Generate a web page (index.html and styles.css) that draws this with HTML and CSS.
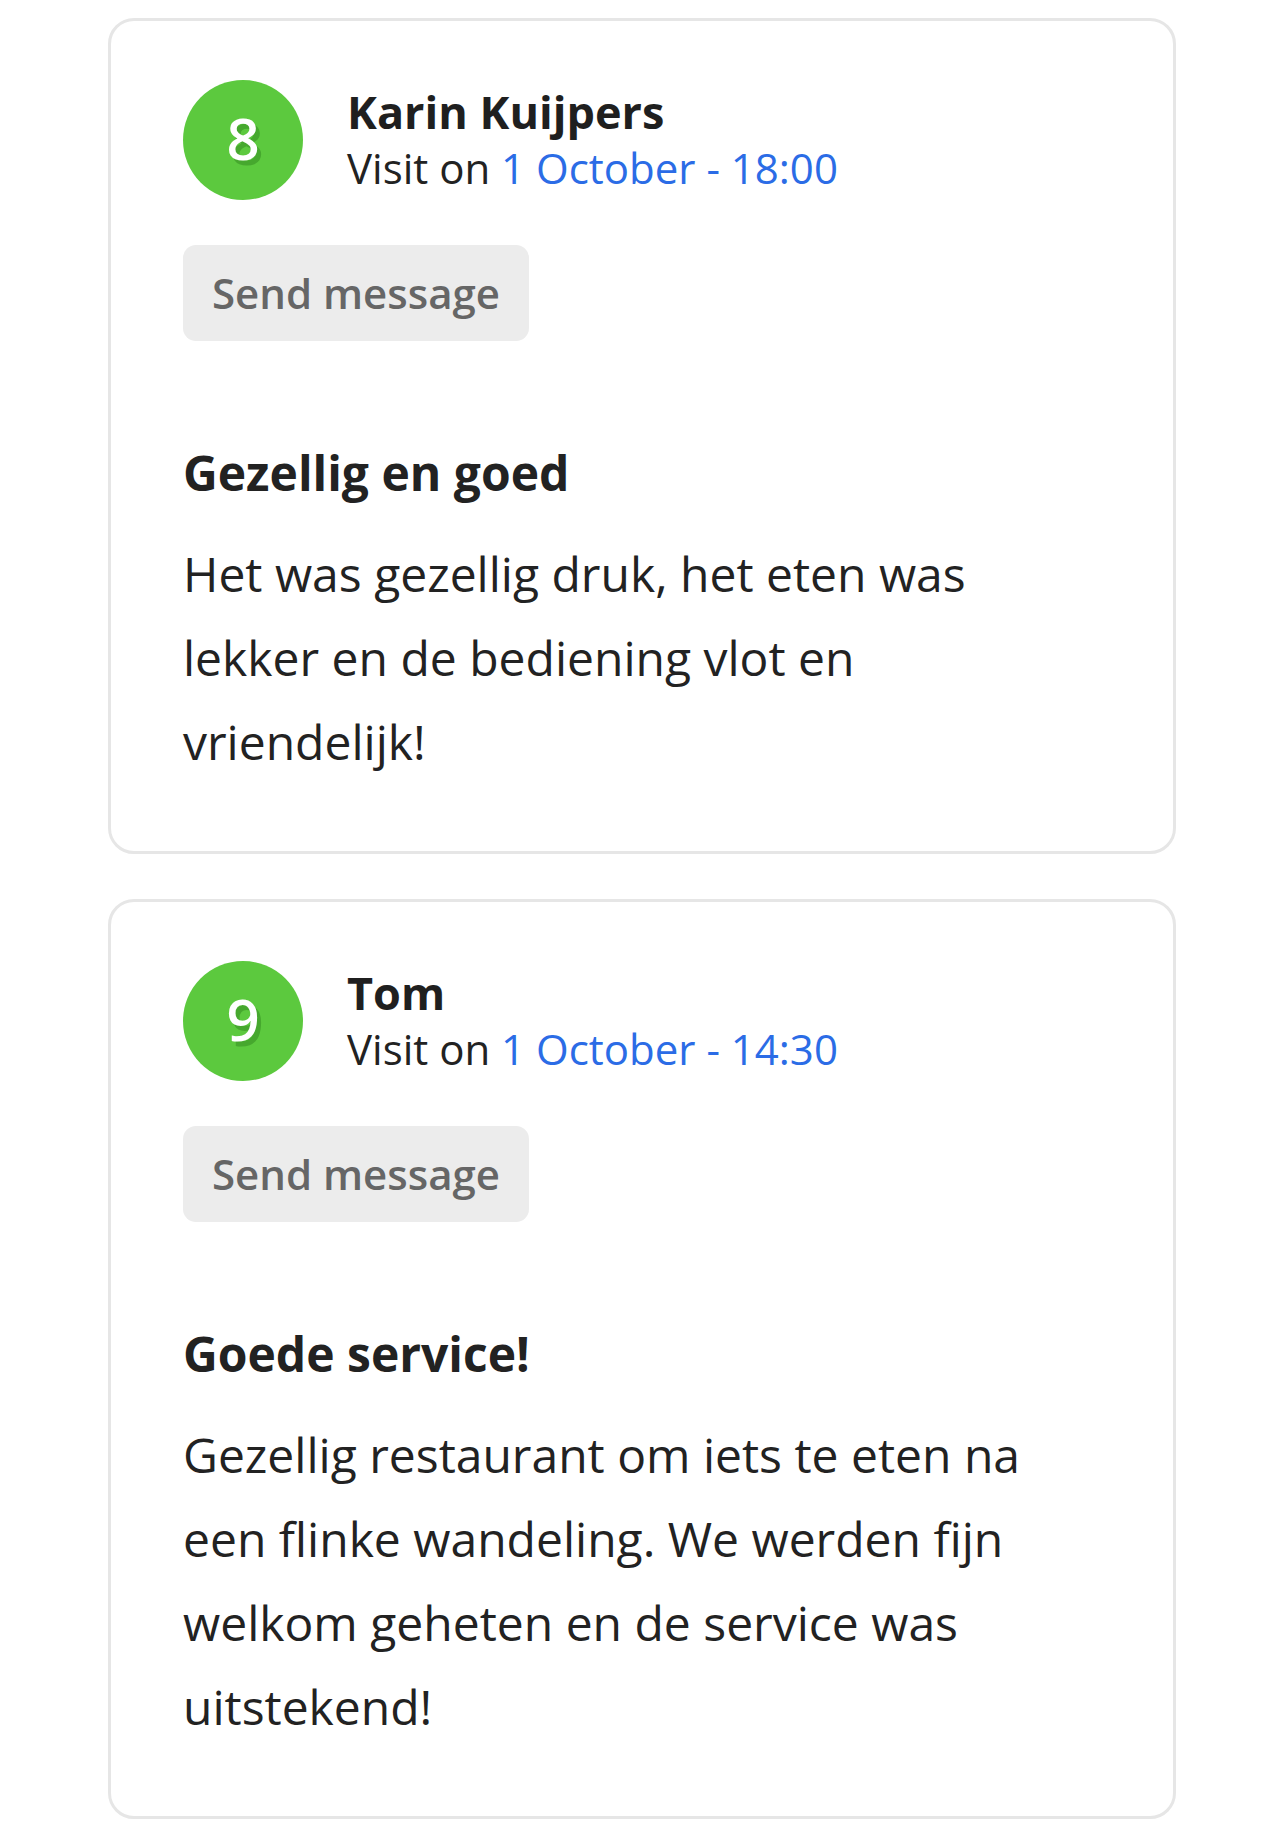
FILE: index.html
```html
<!DOCTYPE html>
<html lang="nl">
<head>
<meta charset="utf-8">
<title>Reviews</title>
<link rel="stylesheet" href="styles.css">
</head>
<body>
<main class="reviews">
  <article class="card">
    <header class="card-head">
      <div class="score"><span>8</span></div>
      <div class="who">
        <div class="name">Karin Kuijpers</div>
        <div class="visit">Visit on <span class="date">1 October - 18:00</span></div>
      </div>
    </header>
    <button class="btn" type="button">Send message</button>
    <h2 class="title">Gezellig en goed</h2>
    <p class="body">Het was gezellig druk, het eten was lekker en de bediening vlot en vriendelijk!</p>
  </article>
  <article class="card">
    <header class="card-head">
      <div class="score"><span>9</span></div>
      <div class="who">
        <div class="name">Tom</div>
        <div class="visit">Visit on <span class="date">1 October - 14:30</span></div>
      </div>
    </header>
    <button class="btn" type="button">Send message</button>
    <h2 class="title">Goede service!</h2>
    <p class="body">Gezellig restaurant om iets te eten na een flinke wandeling. We werden fijn welkom geheten en de service was uitstekend!</p>
  </article>
</main>
</body>
</html>
```
FILE: styles.css
```css
html, body {
  margin: 0;
  padding: 0;
  background: #ffffff;
}
body {
  font-family: "Open Sans", "Noto Sans", sans-serif;
  color: #222222;
}
.reviews {
  display: flex;
  flex-direction: column;
  gap: 45px;
  padding: 18px 108px 0 108px;
}
.card {
  border: 3px solid #e6e6e6;
  border-radius: 26px;
  padding: 59px 72px 67px 72px;
  background: #fff;
}
.card-head {
  display: flex;
  align-items: center;
  gap: 44px;
}
.score {
  width: 120px;
  height: 120px;
  border-radius: 50%;
  background: #5cc93e;
  display: flex;
  align-items: center;
  justify-content: center;
  flex: none;
}
.score span {
  color: #ffffff;
  font-size: 58px;
  font-weight: 600;
  line-height: 1;
  text-shadow: 4px 5px 0 #46a82e;
  position: relative;
  top: -2px;
}
.who {
  display: flex;
  flex-direction: column;
}
.name {
  font-size: 45px;
  font-weight: 700;
  line-height: 56px;
  color: #1f1f1f;
}
.visit {
  font-size: 42px;
  line-height: 56px;
  color: #222;
}
.date {
  color: #2b6ce6;
}
.btn {
  display: block;
  margin-top: 45px;
  border: none;
  border-radius: 13px;
  background: #ececec;
  color: #666666;
  font-family: inherit;
  font-size: 42px;
  font-weight: 600;
  line-height: 56px;
  padding: 20px 29px;
}
.title {
  margin: 100px 0 0 0;
  font-size: 48px;
  line-height: 64px;
  font-weight: 700;
  color: #222;
}
.body {
  margin: 27px 0 0 0;
  font-size: 48px;
  line-height: 84px;
  color: #222;
  max-width: 860px;
}
```
